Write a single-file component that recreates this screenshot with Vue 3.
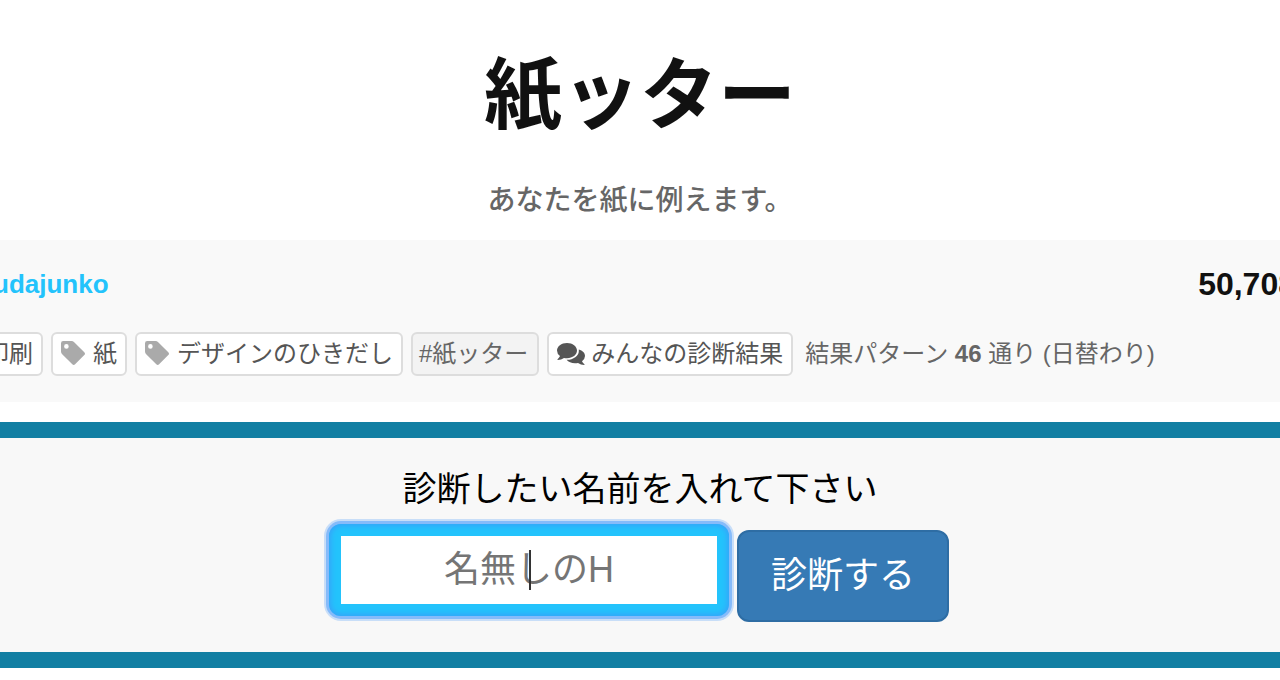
<script setup>
import { ref } from 'vue'

const name = ref('')
const tags = ['印刷', '紙', 'デザインのひきだし']
</script>

<template>
  <main class="page">
    <header class="intro">
      <h1>紙ッター</h1>
      <p>あなたを紙に例えます。</p>
    </header>

    <section class="meta">
      <div class="byline">
        <a class="author" href="#author">udajunko</a>
        <strong class="count">50,708</strong>
      </div>
      <div class="tags">
        <a v-for="tag in tags" :key="tag" class="tag" href="#tag">
          <svg class="tag-icon" viewBox="0 0 24 24" aria-hidden="true">
            <path fill-rule="evenodd" d="M2.200 0H10.500Q12 0 13.200 1.200L23.300 11.300Q24.700 12.700 23.300 14.100L14.100 23.300Q12.700 24.700 11.300 23.300L1.200 13.200Q0 12 0 10.500V2.200Q0 0 2.200 0ZM5.400 3.100A2.300 2.300 0 1 0 5.400 7.700A2.300 2.300 0 1 0 5.400 3.100Z" />
          </svg>
          <span>{{ tag }}</span>
        </a>
        <a class="tag hash" href="#hashtag">#紙ッター</a>
        <a class="tag results" href="#results">
          <svg class="chat-icon" viewBox="0 0 28 22" aria-hidden="true">
            <path d="M10 0C15.600 0 20 3.400 20 7.600S15.600 15.200 10 15.200Q8.400 15.200 7 14.900Q4.300 17 .7 17.100Q.2 16.700.6 16.300Q2.400 14.600 3 13.100Q0 11 0 7.600C0 3.400 4.400 0 10 0Z" />
            <path d="M21.800 6.600C25.600 7.500 28 10.100 28 13Q28 15.900 25 18.200Q25.600 19.800 27.400 21.200Q27.800 21.700 27.300 22Q23.800 22 21 19.900Q19.600 20.200 18 20.200C14.400 20.200 11.300 18.800 9.600 16.800C16 17 21.800 13 21.800 8.200Z" />
          </svg>
          <span>みんなの診断結果</span>
        </a>
        <span class="patterns">結果パターン <b>46</b> 通り (日替わり)</span>
      </div>
    </section>

    <form class="diagnosis" @submit.prevent>
      <label for="name">診断したい名前を入れて下さい</label>
      <div class="controls">
        <div class="field">
          <input id="name" v-model="name" type="text" placeholder="名無しのH" />
          <span v-if="!name" class="caret" aria-hidden="true"></span>
        </div>
        <button type="submit">診断する</button>
      </div>
    </form>
  </main>
</template>

<style>
body {
  background: #fff;
}
</style>

<style scoped>
.page {
  overflow: hidden;
  font-family: "Liberation Sans", "Noto Sans CJK JP", sans-serif;
  color: #666;
}

.intro {
  padding: 40px 0 18px;
  text-align: center;
}

h1 {
  margin: 0;
  font-size: 78px;
  line-height: 112px;
  font-weight: 700;
  color: #111;
}

.intro p {
  margin: 28px 0 0;
  font-size: 28px;
  font-weight: 500;
  line-height: 42px;
}

.meta {
  padding: 24px 0 26px;
  background: #f9f9f9;
}

.byline {
  display: flex;
  justify-content: space-between;
  align-items: center;
  margin: 0 -16px 0 -7px;
  line-height: 40px;
}

.author {
  font-size: 26px;
  font-weight: 700;
  color: #23c3fc;
  text-decoration: none;
}

.count {
  font-size: 32px;
  color: #111;
}

.tags {
  display: flex;
  gap: 8px;
  margin: 28px 0 0 -57px;
  font-size: 24px;
  line-height: 40px;
  white-space: nowrap;
}

.tag {
  display: flex;
  flex: none;
  align-items: center;
  gap: 8px;
  box-sizing: border-box;
  height: 44px;
  padding: 0 8px;
  border: 2px solid #ddd;
  border-radius: 6px;
  background: #fff;
  color: #555;
  text-decoration: none;
}

.tag-icon {
  width: 24px;
  height: 24px;
  margin-bottom: 2px;
  fill: #aaa;
}

.tag.hash {
  padding: 0 9px 0 6px;
  background: #f3f3f3;
  color: #666;
}

.results {
  gap: 6px;
}

.chat-icon {
  width: 28px;
  height: 22px;
  fill: #555;
}

.patterns {
  padding: 0 0 0 4px;
  line-height: 44px;
}

.diagnosis {
  margin-top: 20px;
  padding: 26px 0 30px;
  border-top: 16px solid #127fa3;
  border-bottom: 16px solid #127fa3;
  background: #f8f8f8;
  text-align: center;
}

label {
  display: block;
  font-size: 34px;
  line-height: 50px;
  color: #000;
}

.controls {
  display: flex;
  justify-content: center;
  align-items: flex-end;
  gap: 8px;
  margin-top: 10px;
  padding-right: 2px;
}

.field {
  position: relative;
  width: 400px;
  margin-bottom: 6px;
}

input {
  display: block;
  box-sizing: border-box;
  width: 100%;
  height: 92px;
  padding: 0 8px;
  border: 12px solid #23c3fc;
  border-radius: 12px;
  background: #fff;
  box-shadow: 0 0 0 3px #86bbfa, 0 0 0 5px #c8def8;
  font: inherit;
  font-size: 36px;
  text-align: center;
  color: #333;
  outline: none;
}

input::placeholder {
  color: #757575;
  opacity: 1;
}

.field::after {
  content: "";
  position: absolute;
  inset: 0;
  border-radius: 12px;
  box-shadow: inset 0 0 6px 1px #3d9bf8;
  pointer-events: none;
}

.caret {
  position: absolute;
  top: 26px;
  left: 50%;
  width: 2px;
  height: 40px;
  background: #333;
}

button {
  height: 92px;
  padding: 0 32px 8px;
  border: 2px solid #2e6da4;
  border-radius: 12px;
  background: #367ab5;
  font: inherit;
  font-size: 36px;
  color: #fff;
}
</style>
